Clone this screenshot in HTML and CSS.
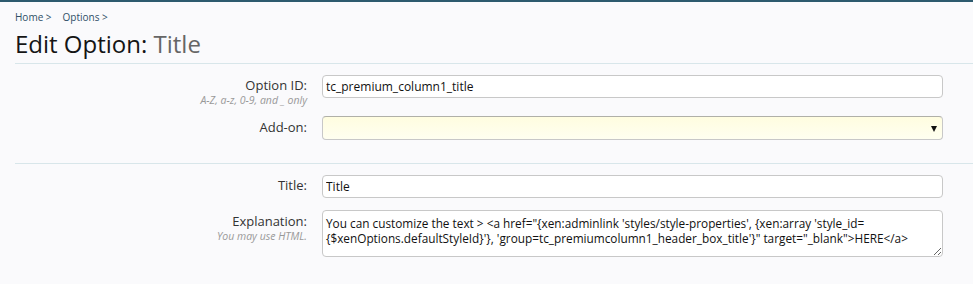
FILE: index.html
```html
<!DOCTYPE html>
<html>
<head>
<meta charset="utf-8">
<title>Edit Option</title>
<link rel="stylesheet" href="styles.css">
</head>
<body>
<div class="page">
  <nav class="crumbs"><a href="#">Home &gt;</a><a href="#">Options &gt;</a></nav>
  <h1 class="title">Edit Option: <span class="sub">Title</span></h1>
  <form class="form">
    <div class="row">
      <div class="label"><label>Option ID:</label><div class="hint">A-Z, a-z, 0-9, and _ only</div></div>
      <div class="ctrl"><input class="text" type="text" value="tc_premium_column1_title"></div>
    </div>
    <div class="row">
      <div class="label"><label>Add-on:</label></div>
      <div class="ctrl"><div class="select"><span class="arrow"></span></div></div>
    </div>
    <hr class="sep">
    <div class="row row-wide">
      <div class="label"><label>Title:</label></div>
      <div class="ctrl"><input class="text" type="text" value="Title"></div>
    </div>
    <div class="row">
      <div class="label"><label>Explanation:</label><div class="hint">You may use HTML.</div></div>
      <div class="ctrl"><textarea class="area">You can customize the text &gt; &lt;a href="{xen:adminlink 'styles/style-properties', {xen:array 'style_id=
{$xenOptions.defaultStyleId}'}, 'group=tc_premiumcolumn1_header_box_title'}" target="_blank"&gt;HERE&lt;/a&gt;</textarea></div>
    </div>
  </form>
</div>
</body>
</html>
```

FILE: styles.css
```css
html, body {
  margin: 0;
  padding: 0;
  background: #fafafc;
}
body {
  border-top: 2px solid #2d5a6e;
  font-family: "Open Sans", "DejaVu Sans", sans-serif;
  color: #222;
}
.page {
  padding: 8px 0 0 15px;
}
.crumbs {
  display: flex;
  gap: 11px;
  font-size: 10px;
  line-height: 14px;
  height: 14px;
}
.crumbs a {
  color: #2f4f67;
  text-decoration: none;
}
.title {
  margin: 6px 0 0 0;
  font-weight: normal;
  font-size: 24px;
  line-height: 28px;
  color: #151515;
  padding-bottom: 5px;
  border-bottom: 1px solid #d8e6ea;
}
.title .sub {
  color: #666;
}
.form {
  padding-top: 10px;
}
.row {
  display: flex;
  margin-bottom: 10px;
}
.row-wide {
  margin-bottom: 12px;
}
.label {
  width: 292px;
  text-align: right;
  padding-right: 15px;
  flex: none;
}
.label label {
  display: block;
  font-size: 13px;
  line-height: 17px;
  padding-top: 3px;
  color: #333;
}
.hint {
  font-size: 10.5px;
  line-height: 12px;
  font-style: italic;
  color: #999;
}
.ctrl {
  width: 621px;
  flex: none;
}
.text {
  box-sizing: border-box;
  width: 100%;
  height: 23px;
  border: 1px solid #c8c8c8;
  border-radius: 4px;
  background: #fff;
  font-family: "Open Sans", "DejaVu Sans", sans-serif;
  font-size: 12px;
  padding: 0 3px;
  color: #111;
  outline: none;
}
.select {
  box-sizing: border-box;
  position: relative;
  height: 24px;
  border: 1px solid #c8c8c8;
  border-top-color: #b0b0a8;
  border-radius: 4px;
  background: linear-gradient(#fffde0, #fffff0);
}
.arrow {
  position: absolute;
  right: 5px;
  top: 9px;
  width: 0;
  height: 0;
  border-left: 3.5px solid transparent;
  border-right: 3.5px solid transparent;
  border-top: 6px solid #111;
}
.sep {
  margin: 23px 0 10px 0;
  border: 0;
  border-top: 1px solid #d8e6ea;
  height: 0;
}
.area {
  box-sizing: border-box;
  width: 100%;
  height: 47px;
  border: 1px solid #c8c8c8;
  border-radius: 4px;
  background: #fff;
  font-family: "Open Sans", "DejaVu Sans", sans-serif;
  font-size: 11.8px;
  line-height: 15px;
  padding: 5px 3px 2px;
  color: #111;
  resize: vertical;
  overflow: hidden;
  white-space: pre-wrap;
  outline: none;
  display: block;
}
```
